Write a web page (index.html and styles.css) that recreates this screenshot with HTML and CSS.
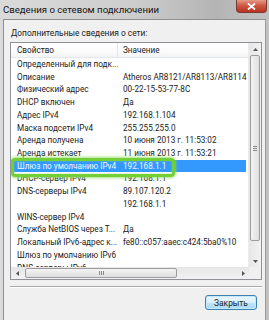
FILE: index.html
```html
<!DOCTYPE html>
<html lang="ru">
<head>
<meta charset="utf-8">
<title>Сведения о сетевом подключении</title>
<link rel="stylesheet" href="styles.css">
</head>
<body>
<div class="win">
  <div class="titlebar">
    <span class="title">Сведения о сетевом подключении</span>
    <div class="close"><svg width="9" height="7" viewBox="0 0 9 7"><path d="M1 0.5 L8 6.5 M8 0.5 L1 6.5" stroke="#fff" stroke-width="1.8"/></svg></div>
  </div>
  <div class="dialog">
    <div class="label">Дополнительные сведения о сети:</div>
    <div class="listbox">
      <div class="main">
        <div class="content">
          <div class="header">
            <div class="c1">Свойство</div>
            <div class="c2">Значение</div>
          </div>
          <div class="row"><div class="c1">Определенный для подк...</div><div class="c2"></div></div>
          <div class="row"><div class="c1">Описание</div><div class="c2">Atheros AR8121/AR8113/AR8114</div></div>
          <div class="row"><div class="c1">Физический адрес</div><div class="c2">00-22-15-53-77-8C</div></div>
          <div class="row"><div class="c1">DHCP включен</div><div class="c2">Да</div></div>
          <div class="row"><div class="c1">Адрес IPv4</div><div class="c2">192.168.1.104</div></div>
          <div class="row"><div class="c1">Маска подсети IPv4</div><div class="c2">255.255.255.0</div></div>
          <div class="row"><div class="c1">Аренда получена</div><div class="c2">10 июня 2013 г. 11:53:02</div></div>
          <div class="row"><div class="c1">Аренда истекает</div><div class="c2">11 июня 2013 г. 11:53:21</div></div>
          <div class="row sel"><div class="c1">Шлюз по умолчанию IPv4</div><div class="c2">192.168.1.1</div></div>
          <div class="row"><div class="c1">DHCP-сервер IPv4</div><div class="c2">192.168.1.1</div></div>
          <div class="row"><div class="c1">DNS-серверы IPv4</div><div class="c2">89.107.120.2</div></div>
          <div class="row"><div class="c1"></div><div class="c2">192.168.1.1</div></div>
          <div class="row"><div class="c1">WINS-сервер IPv4</div><div class="c2"></div></div>
          <div class="row"><div class="c1">Служба NetBIOS через Т...</div><div class="c2">Да</div></div>
          <div class="row"><div class="c1">Локальный IPv6-адрес к...</div><div class="c2">fe80::c057:aaec:c424:5ba0%10</div></div>
          <div class="row"><div class="c1">Шлюз по умолчанию IPv6</div><div class="c2"></div></div>
          <div class="row"><div class="c1">DNS-серверы IPv6</div><div class="c2"></div></div>
        </div>
        <div class="vscroll">
          <div class="arrow"><svg width="5" height="3" viewBox="0 0 5 3"><path d="M0 3 L2.5 0 L5 3Z" fill="#555"/></svg></div>
          <div class="vtrack"><div class="vthumb"><div class="grip-v"></div></div></div>
          <div class="arrow"><svg width="5" height="3" viewBox="0 0 5 3"><path d="M0 0 L2.5 3 L5 0Z" fill="#555"/></svg></div>
        </div>
      </div>
      <div class="hscroll">
        <div class="harrow"><svg width="3" height="5" viewBox="0 0 3 5"><path d="M3 0 L0 2.5 L3 5Z" fill="#555"/></svg></div>
        <div class="htrack"><div class="hthumb"><div class="grip-h"></div></div></div>
        <div class="harrow"><svg width="3" height="5" viewBox="0 0 3 5"><path d="M0 0 L3 2.5 L0 5Z" fill="#555"/></svg></div>
        <div class="corner"></div>
      </div>
      <div class="mark"></div>
    </div>
    <div class="sep"></div>
    <div class="btnrow"><button class="btn">Закрыть</button></div>
  </div>
</div>
</body>
</html>
```
FILE: styles.css
```css
html, body {
  margin: 0;
  padding: 0;
  width: 269px;
  height: 320px;
  overflow: hidden;
  background: #c9c9c9;
}
.win {
  width: 269px;
  height: 320px;
  display: flex;
  flex-direction: column;
  background: linear-gradient(to right, #dadada 0%, #cdcdcd 50%, #b4b4b4 80%, #c2c2c2 100%);
  font-family: Roboto, "Noto Sans", sans-serif;
  color: #222;
}
.titlebar {
  height: 19px;
  flex: none;
  display: flex;
  align-items: flex-start;
  justify-content: space-between;
}
.title {
  font-size: 9.6px;
  line-height: 13px;
  padding: 3px 0 0 3px;
  color: #141414;
}
.close {
  width: 31px;
  height: 13px;
  margin-right: 2px;
  border: 1px solid #7a3a32;
  border-top: none;
  border-radius: 0 0 4px 4px;
  background: linear-gradient(to bottom, #e59b87 0%, #cf5a45 45%, #b9321f 100%);
  display: flex;
  align-items: center;
  justify-content: center;
  box-sizing: border-box;
}
.dialog {
  flex: 1;
  margin: 0 3px 0 3px;
  border-top: 1px solid #8f8f8f;
  border-left: 1px solid #8f8f8f;
  border-right: 1px solid #9a9a9a;
  background: #f0f0f0;
  padding: 0 3px 0 6px;
  display: flex;
  flex-direction: column;
}
.label {
  font-size: 8.4px;
  line-height: 12px;
  margin-top: 7px;
  height: 12px;
  padding-left: 1px;
}
.listbox {
  position: relative;
  margin-top: 3px;
  height: 238px;
  box-sizing: border-box;
  border: 1px solid #8e9196;
  background: #fff;
  display: flex;
  flex-direction: column;
  overflow: hidden;
}
.main {
  flex: 1;
  display: flex;
  min-height: 0;
}
.content {
  flex: 1;
  overflow: hidden;
  font-size: 8.2px;
}
.header {
  height: 14px;
  display: flex;
  border-bottom: 1px solid #e3e6eb;
  background: linear-gradient(to bottom, #ffffff 0%, #fbfbfb 60%, #f3f4f6 100%);
  line-height: 14px;
}
.header .c1 {
  border-right: 1px solid #e3e6eb;
}
.c1 {
  width: 107px;
  flex: none;
  padding-left: 6px;
  box-sizing: border-box;
  white-space: nowrap;
  overflow: hidden;
}
.c2 {
  flex: 1;
  padding-left: 5px;
  white-space: nowrap;
  overflow: hidden;
}
.row {
  height: 12.73px;
  line-height: 12.73px;
  display: flex;
}
.row.sel {
  background: #3399ff;
  color: #eef8ff;
  margin-right: 2px;
}
.vscroll {
  width: 12px;
  flex: none;
  background: linear-gradient(to right, #e6e6e6, #f2f2f2);
  display: flex;
  flex-direction: column;
  border-left: 1px solid #ebebeb;
}
.arrow {
  height: 12px;
  flex: none;
  display: flex;
  align-items: center;
  justify-content: center;
}
.vtrack {
  flex: 1;
  padding: 0 1px;
  display: flex;
  flex-direction: column;
}
.vthumb {
  height: 184px;
  border: 1px solid #9c9c9c;
  border-radius: 2px;
  background: linear-gradient(to right, #f4f4f4, #dedede);
  display: flex;
  align-items: center;
  justify-content: center;
}
.grip-v {
  width: 4px;
  height: 5px;
  background: repeating-linear-gradient(to bottom, #8a8a8a 0 1px, transparent 1px 2px);
}
.hscroll {
  height: 12px;
  flex: none;
  display: flex;
  background: linear-gradient(to bottom, #e6e6e6, #f2f2f2);
}
.harrow {
  width: 12px;
  flex: none;
  display: flex;
  align-items: center;
  justify-content: center;
}
.htrack {
  flex: 1;
  padding: 1px 0;
  display: flex;
}
.hthumb {
  width: 150px;
  margin-left: 2px;
  border: 1px solid #9c9c9c;
  border-radius: 2px;
  background: linear-gradient(to bottom, #f4f4f4, #dedede);
  display: flex;
  align-items: center;
  justify-content: center;
}
.grip-h {
  width: 5px;
  height: 4px;
  background: repeating-linear-gradient(to right, #8a8a8a 0 1px, transparent 1px 2px);
}
.corner {
  width: 12px;
  flex: none;
  background: #f0f0f0;
}
.mark {
  position: absolute;
  left: 0;
  top: 115px;
  width: 164px;
  height: 19px;
  box-sizing: border-box;
  border: 3px solid #72cf36;
  border-radius: 4px;
  box-shadow: 0 0 3px 1px rgba(140, 220, 90, 0.8), inset 0 0 2px rgba(140, 220, 90, 0.8);
}
.sep {
  margin-top: 6px;
  height: 1px;
  background: #a8a8a8;
  border-bottom: 1px solid #ffffff;
}
.btnrow {
  display: flex;
  justify-content: flex-end;
  padding-right: 5px;
  margin-top: 7px;
}
.btn {
  width: 52px;
  height: 15px;
  padding: 0;
  font-family: Roboto, "Noto Sans", sans-serif;
  font-size: 8.4px;
  line-height: 12px;
  color: #1a1a1a;
  border: 1px solid #3c7fb1;
  border-radius: 3px;
  background: linear-gradient(to bottom, #eaf6fd 0%, #d9f0fc 50%, #bee6fd 51%, #a7d9f5 100%);
  box-shadow: inset 0 0 0 1px #c5e8fb;
}
```
